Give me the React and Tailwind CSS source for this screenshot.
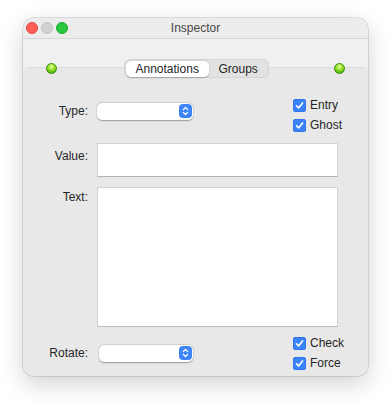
import { useState } from 'react'

function Check({ label, checked, onToggle }) {
  return (
    <button onClick={onToggle} className="flex items-center h-[20px] gap-[4px] text-[12px] text-[#262626]">
      <span className={`w-[13px] h-[13px] rounded-[3px] flex items-center justify-center ${checked ? 'bg-[#3a82f7] shadow-[inset_0_0_0_0.5px_#2a6be0]' : 'bg-white border border-[#bdbdbd]'}`}>
        {checked && (
          <svg width="9" height="9" viewBox="0 0 10 10" fill="none">
            <path d="M1.6 5.3 L4 7.7 L8.4 2.2" stroke="white" strokeWidth="1.8" strokeLinecap="round" strokeLinejoin="round" />
          </svg>
        )}
      </span>
      <span>{label}</span>
    </button>
  )
}

function Popup({ width }) {
  return (
    <div className={`${width} h-[17px] bg-white rounded-[5px] shadow-[0_0.5px_1.5px_rgba(0,0,0,0.3),0_0_0_0.5px_rgba(0,0,0,0.08)] flex items-center justify-end pr-[1px]`}>
      <span className="w-[13px] h-[14px] rounded-[4px] bg-[#3d85f7] flex items-center justify-center">
        <svg width="7" height="10" viewBox="0 0 7 10" fill="none">
          <path d="M1.3 3.6 L3.5 1.5 L5.7 3.6 M1.3 6.4 L3.5 8.5 L5.7 6.4" stroke="white" strokeWidth="1.3" strokeLinecap="round" strokeLinejoin="round" />
        </svg>
      </span>
    </div>
  )
}

function Dot() {
  return <span className="w-[11px] h-[11px] rounded-full border border-[#3f8a0a] bg-[radial-gradient(circle_at_50%_30%,#e6ff9e_0%,#8ee024_45%,#4fae07_80%)]" />
}

export default function App() {
  const [tab, setTab] = useState('Annotations')
  const [checks, setChecks] = useState({ Entry: true, Ghost: true, Check: true, Force: true })
  const toggle = k => setChecks(c => ({ ...c, [k]: !c[k] }))

  return (
    <div className="w-[391px] h-[403px] bg-white pt-[18px] pl-[23px]" style={{ fontFamily: '"Liberation Sans", Arial, sans-serif' }}>
      <div className="w-[345px] h-[358px] rounded-[10px] bg-[#f0f0f0] shadow-[0_0_0_0.5px_rgba(0,0,0,0.22),0_8px_24px_rgba(0,0,0,0.18)] flex flex-col overflow-hidden">
        <div className="h-[21px] relative flex items-center justify-center border-b border-[#d6d6d6] bg-[#ececec]">
          <div className="absolute left-[3px] top-[4px] flex gap-[3px]">
            <span className="w-[12px] h-[12px] rounded-full bg-[#fd5f57] border border-[#e2463f]" />
            <span className="w-[12px] h-[12px] rounded-full bg-[#d1d1d1] border border-[#c1c1c1]" />
            <span className="w-[12px] h-[12px] rounded-full bg-[#2ac740] border border-[#1fa631]" />
          </div>
          <span className="text-[12px] text-[#4a4a4a]">Inspector</span>
        </div>

        <div className="h-[28px]" />

        <div className="flex-1 relative bg-[#e8e8e8] border-t border-[#dcdcdc] rounded-t-[6px]">
          <div className="absolute -top-[9px] left-0 right-0 flex items-center px-[23px]">
            <Dot />
            <div className="flex-1 flex justify-center pl-[2px]">
              <div className="flex h-[19px] rounded-[6px] bg-[#e2e2e2] border border-[#d4d4d4] p-[0.5px] text-[12px] text-[#262626]">
                {['Annotations', 'Groups'].map(t => (
                  <button
                    key={t}
                    onClick={() => setTab(t)}
                    className={`px-[10px] rounded-[5px] leading-[16px] ${t === 'Annotations' ? 'w-[83px]' : 'w-[59px]'} ${tab === t ? 'bg-white shadow-[0_0.5px_1.5px_rgba(0,0,0,0.25)]' : ''}`}
                  >
                    {t}
                  </button>
                ))}
              </div>
            </div>
            <Dot />
          </div>

          <div className="pt-[27px] flex flex-col text-[12px] text-[#262626]">
            <div className="flex items-start">
              <div className="flex items-center pt-[7px]">
                <span className="w-[65px] text-right">Type:</span>
                <div className="ml-[9px]"><Popup width="w-[96px]" /></div>
              </div>
              <div className="ml-[100px] flex flex-col">
                <Check label="Entry" checked={checks.Entry} onToggle={() => toggle('Entry')} />
                <Check label="Ghost" checked={checks.Ghost} onToggle={() => toggle('Ghost')} />
              </div>
            </div>

            <div className="flex items-start mt-[8px]">
              <span className="w-[65px] text-right pt-[5px] leading-[16px]">Value:</span>
              <input className="ml-[9px] w-[241px] h-[34px] bg-white border border-[#d2d2d2] border-b-[#b4b4b4] outline-none px-1" />
            </div>

            <div className="flex items-start mt-[10px]">
              <span className="w-[65px] text-right pt-[2px] leading-[16px]">Text:</span>
              <textarea className="ml-[9px] w-[241px] h-[140px] bg-white border border-[#d2d2d2] border-b-[#bcbcbc] outline-none resize-none px-1" />
            </div>

            <div className="flex items-center mt-[6px]">
              <span className="w-[65px] text-right">Rotate:</span>
              <div className="ml-[11px]"><Popup width="w-[94px]" /></div>
              <div className="ml-[100px] flex flex-col">
                <Check label="Check" checked={checks.Check} onToggle={() => toggle('Check')} />
                <Check label="Force" checked={checks.Force} onToggle={() => toggle('Force')} />
              </div>
            </div>
          </div>
        </div>
      </div>
    </div>
  )
}
